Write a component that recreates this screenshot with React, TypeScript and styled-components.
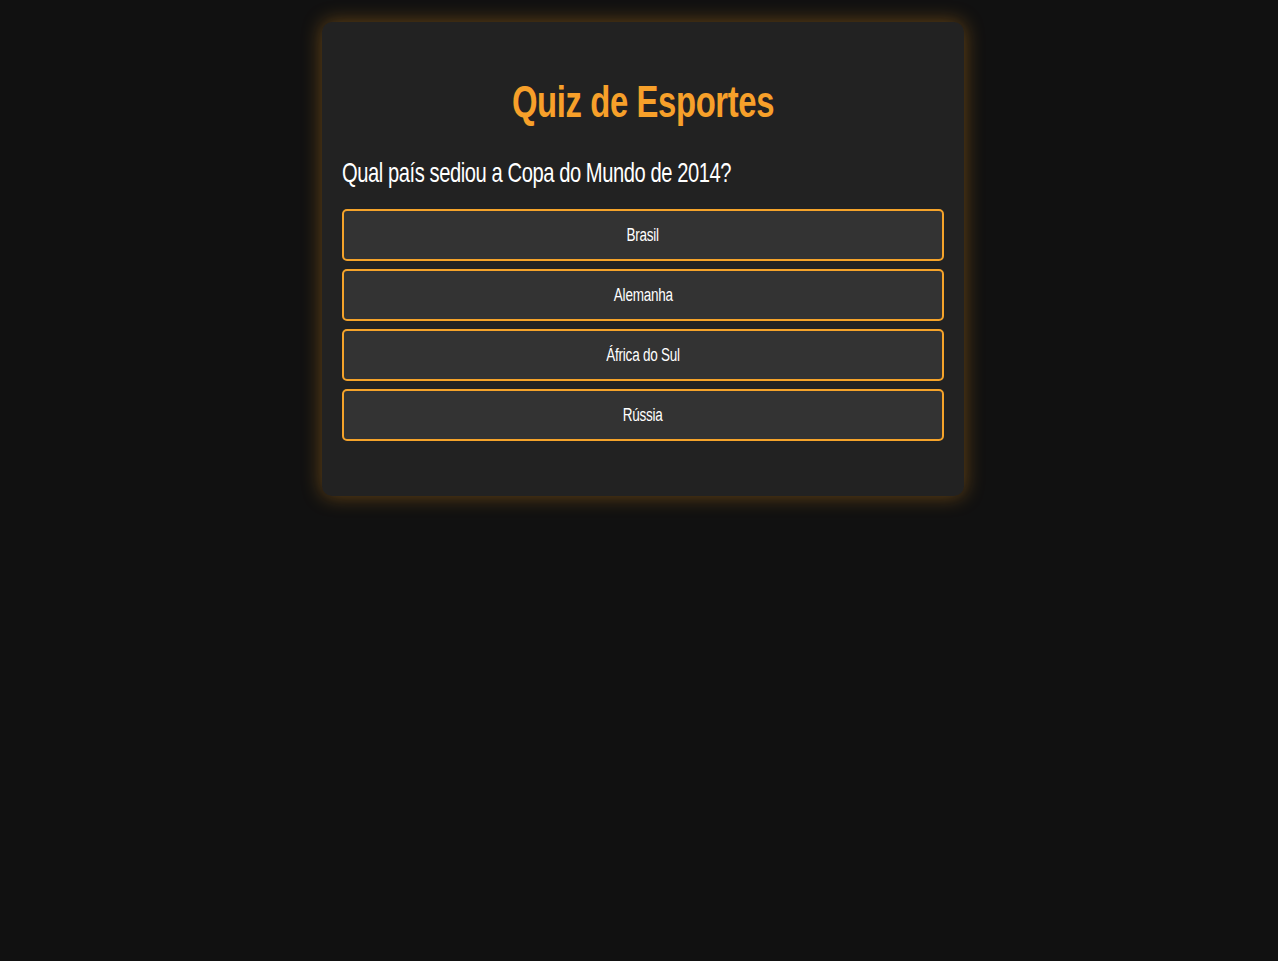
import React from "react";
import styled, { createGlobalStyle } from "styled-components";

const Global = createGlobalStyle`
  html, body {
    margin: 0;
    padding: 0;
    background: #111111;
    font-family: "Liberation Sans", Arial, sans-serif;
  }
`;

const Page = styled.div`
  min-height: 961px;
  display: flex;
  justify-content: center;
  align-items: flex-start;
  padding: 22px 0 0 8px;
  box-sizing: border-box;
`;

const Card = styled.div`
  width: 642px;
  box-sizing: border-box;
  background: #222222;
  border-radius: 10px;
  box-shadow: 0 0 20px rgba(255, 160, 30, 0.38);
  padding: 55px 20px 55px;
  display: flex;
  flex-direction: column;
`;

const Title = styled.h1`
  margin: 0;
  color: #f7a02a;
  font-size: 44px;
  font-weight: bold;
  text-align: center;
  line-height: 49px;
  letter-spacing: -0.5px;
  transform: scaleX(0.746);
`;

const Question = styled.p`
  margin: 31px 0 20px;
  color: #ffffff;
  font-size: 28px;
  line-height: 32px;
  letter-spacing: -0.6px;
  white-space: nowrap;
  transform: scaleX(0.72);
  transform-origin: left center;
`;

const Options = styled.div`
  display: flex;
  flex-direction: column;
  gap: 8px;
`;

const Option = styled.button`
  height: 52px;
  width: 100%;
  background: #333333;
  border: 2px solid #f5a32a;
  border-radius: 5px;
  color: #ffffff;
  font-family: inherit;
  font-size: 18px;
  letter-spacing: -0.3px;
  cursor: pointer;
  display: flex;
  align-items: center;
  justify-content: center;
`;

const Label = styled.span`
  display: inline-block;
  transform: scaleX(0.75);
`;

const answers = ["Brasil", "Alemanha", "África do Sul", "Rússia"];

export default function App() {
  return (
    <>
      <Global />
      <Page>
        <Card>
          <Title>Quiz de Esportes</Title>
          <Question>Qual país sediou a Copa do Mundo de 2014?</Question>
          <Options>
            {answers.map((a) => (
              <Option key={a}>
                <Label>{a}</Label>
              </Option>
            ))}
          </Options>
        </Card>
      </Page>
    </>
  );
}
